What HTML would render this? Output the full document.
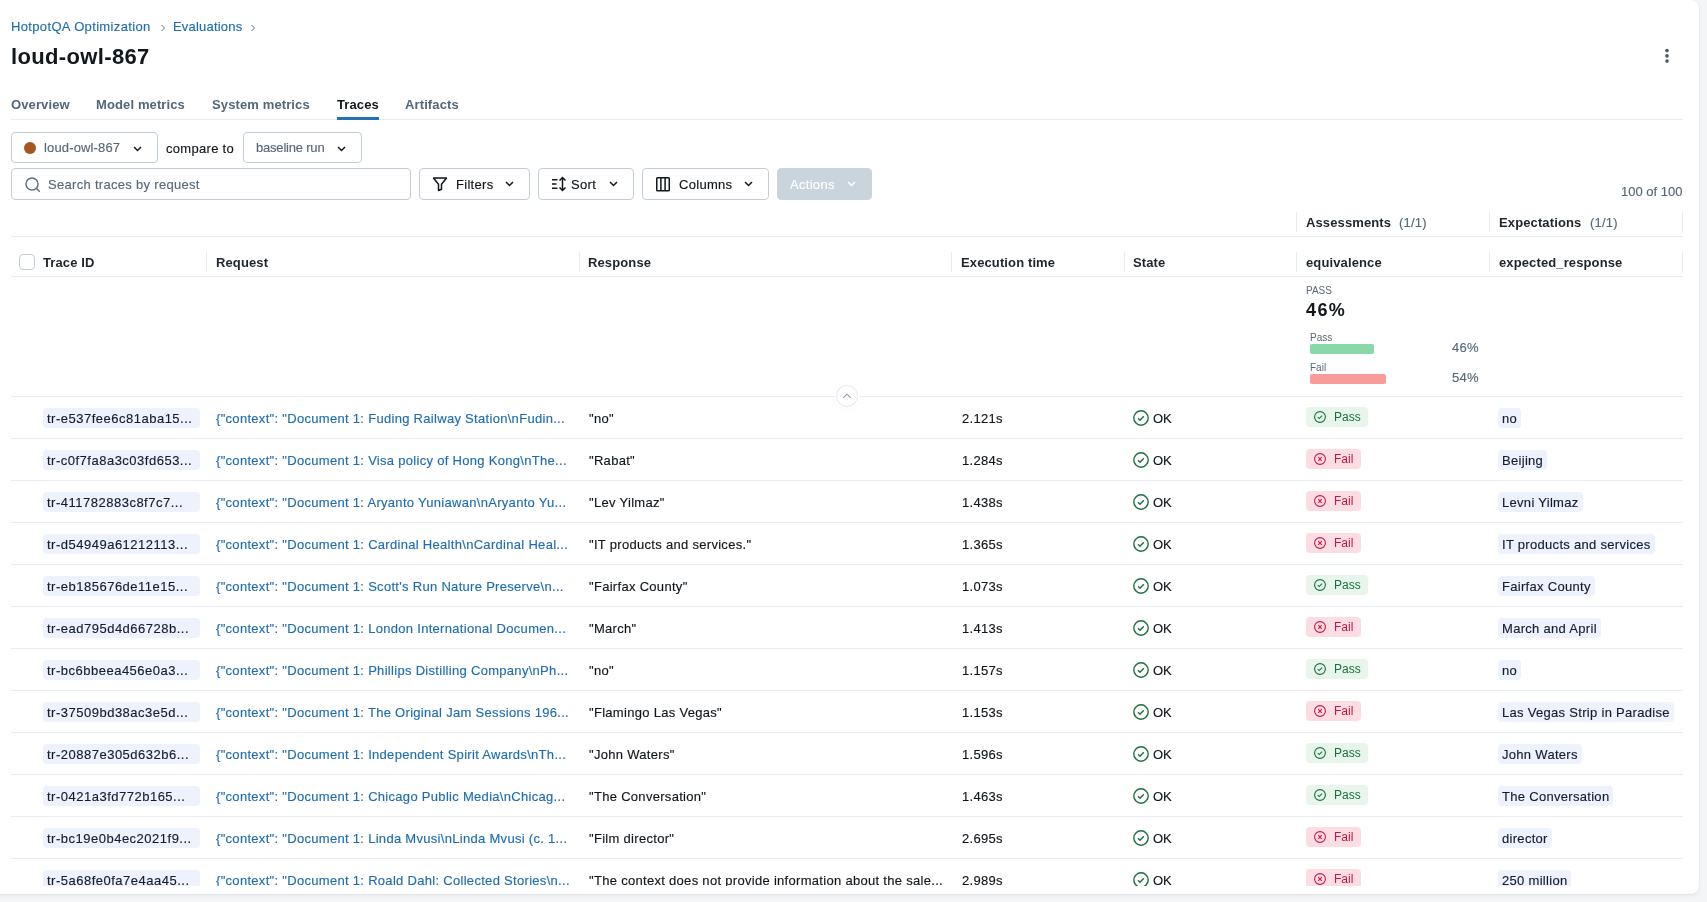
<!DOCTYPE html>
<html><head><meta charset="utf-8">
<style>
*{box-sizing:border-box;margin:0;padding:0}
html,body{width:1707px;height:902px;overflow:hidden;background:#f4f5f7;font-family:"Liberation Sans",sans-serif;color:#11171c}
.panel{position:absolute;left:-10px;top:0;width:1709px;height:894px;background:#fff;border-radius:8px;box-shadow:0 1px 2px rgba(0,0,0,0.05),0 2px 6px rgba(0,0,0,0.04),0 0 1px rgba(0,0,0,0.08);overflow:hidden}
.abs{position:absolute;white-space:nowrap}
.c{position:absolute;left:10px;top:0;width:1699px;height:884px;will-change:transform}
.t{position:absolute;white-space:nowrap;font-size:13px;line-height:16px;letter-spacing:0.3px;-webkit-text-stroke:0.15px currentColor}
.b{font-weight:700;letter-spacing:0.12px;-webkit-text-stroke:0;color:#1e252b}
.g{color:#56697a}
.bl{color:#1f6db0}
.btn{position:absolute;border:1px solid #c0cdd8;border-radius:4px;background:#fff;height:32px}
.hl{position:absolute;height:1px;background:#e8ecf0;left:11px;width:1672px}
.vs{position:absolute;width:1px;background:#e8ecf0}
.tag{-webkit-text-stroke:0.15px currentColor;position:absolute;height:20px;border-radius:4px;background:#edf2fd;color:#141d33;white-space:nowrap;font-size:13px;line-height:20px;letter-spacing:0.3px;padding:1px 4px 0;overflow:hidden}
.rows{position:absolute;left:0;top:0;width:1699px;height:886px;overflow:hidden}
</style></head><body>
<div class="panel"><div class="c">

<div class="t bl" style="left:11px;top:19px;letter-spacing:0.35px">HotpotQA Optimization</div>
<svg class="abs" style="left:160px;top:24px" width="6" height="8" viewBox="0 0 6 8"><path d="M1.5 1l3 3-3 3" fill="none" stroke="#5f7281" stroke-width="1"/></svg>
<div class="t bl" style="left:173px;top:19px;letter-spacing:0.2px">Evaluations</div>
<svg class="abs" style="left:250px;top:24px" width="6" height="8" viewBox="0 0 6 8"><path d="M1.5 1l3 3-3 3" fill="none" stroke="#5f7281" stroke-width="1"/></svg>
<div class="abs" style="left:11px;top:43px;font-size:22px;line-height:28px;font-weight:700;letter-spacing:0.35px">loud-owl-867</div>
<svg class="abs" style="left:1663px;top:47px" width="8" height="18" viewBox="0 0 8 18"><circle cx="4" cy="3.6" r="1.8" fill="#44596a"/><circle cx="4" cy="8.9" r="1.8" fill="#44596a"/><circle cx="4" cy="14.1" r="1.8" fill="#44596a"/></svg>
<div class="t b" style="left:11px;top:97px;color:#53677a">Overview</div>
<div class="t b" style="left:96px;top:97px;color:#53677a">Model metrics</div>
<div class="t b" style="left:212px;top:97px;color:#53677a">System metrics</div>
<div class="t b" style="left:337px;top:97px;color:#11171c">Traces</div>
<div class="t b" style="left:405px;top:97px;color:#53677a">Artifacts</div>
<div class="hl" style="top:119px"></div>
<div class="abs" style="left:337px;top:117px;width:42px;height:3px;background:#2272b4"></div>
<div class="btn" style="left:11px;top:132px;width:147px;height:31px"></div>
<div class="abs" style="left:24px;top:142px;width:12px;height:12px;border-radius:6px;background:#a4561f"></div>
<div class="t g" style="left:44px;top:140px;letter-spacing:0.15px">loud-owl-867</div>
<svg class="abs" style="left:133px;top:146px" width="9" height="6" viewBox="0 0 9 6"><path d="M1 1l3.5 3.5L8 1" fill="none" stroke="#11171c" stroke-width="1.5"/></svg>
<div class="t" style="left:166px;top:141px">compare to</div>
<div class="btn" style="left:243px;top:132px;width:119px;height:31px"></div>
<div class="t g" style="left:256px;top:140px;letter-spacing:-0.2px">baseline run</div>
<svg class="abs" style="left:337px;top:146px" width="9" height="6" viewBox="0 0 9 6"><path d="M1 1l3.5 3.5L8 1" fill="none" stroke="#11171c" stroke-width="1.5"/></svg>
<div class="btn" style="left:11px;top:168px;width:400px"></div>
<svg class="abs" style="left:25px;top:177px" width="16" height="16" viewBox="0 0 16 16"><circle cx="7" cy="7" r="6" fill="none" stroke="#5f7281" stroke-width="1.5"/><path d="M11.3 11.3l3.5 3.5" stroke="#5f7281" stroke-width="1.5"/></svg>
<div class="t g" style="left:48px;top:177px">Search traces by request</div>
<div class="btn" style="left:419px;top:168px;width:111px"></div>
<svg class="abs" style="left:432px;top:176px" width="16" height="16" viewBox="0 0 16 16"><path d="M1.5 2h13l-5 6.3v5l-3 1.2V8.3z" fill="none" stroke="#11171c" stroke-width="1.5" stroke-linejoin="round"/></svg>
<div class="t" style="left:456px;top:177px">Filters</div>
<svg class="abs" style="left:505px;top:181px" width="9" height="6" viewBox="0 0 9 6"><path d="M1 1l3.5 3.5L8 1" fill="none" stroke="#11171c" stroke-width="1.5"/></svg>
<div class="btn" style="left:538px;top:168px;width:96px"></div>
<svg class="abs" style="left:551px;top:176px" width="17" height="16" viewBox="0 0 17 16"><path d="M1 3.7h5.5M1 7.9h4.5M1 12.3h5.5" stroke="#11171c" stroke-width="1.5"/><path d="M11.5 1.5v13M8.5 4.5l3-3 3 3M8.5 11.5l3 3 3-3" fill="none" stroke="#11171c" stroke-width="1.5"/></svg>
<div class="t" style="left:571px;top:177px">Sort</div>
<svg class="abs" style="left:609px;top:181px" width="9" height="6" viewBox="0 0 9 6"><path d="M1 1l3.5 3.5L8 1" fill="none" stroke="#11171c" stroke-width="1.5"/></svg>
<div class="btn" style="left:642px;top:168px;width:127px"></div>
<svg class="abs" style="left:656px;top:176px" width="14" height="16" viewBox="0 0 14 16"><rect x="0.75" y="1.75" width="12.5" height="13" rx="0.8" fill="none" stroke="#11171c" stroke-width="1.5"/><path d="M4.9 2v12.5M9.1 2v12.5" stroke="#11171c" stroke-width="1.5"/></svg>
<div class="t" style="left:679px;top:177px">Columns</div>
<svg class="abs" style="left:744px;top:181px" width="9" height="6" viewBox="0 0 9 6"><path d="M1 1l3.5 3.5L8 1" fill="none" stroke="#11171c" stroke-width="1.5"/></svg>
<div class="btn" style="left:777px;top:168px;width:95px;background:#cad4dd;border-color:#cad4dd"></div>
<div class="t" style="left:790px;top:177px;color:#fff">Actions</div>
<svg class="abs" style="left:847px;top:181px" width="9" height="6" viewBox="0 0 9 6"><path d="M1 1l3.5 3.5L8 1" fill="none" stroke="#fff" stroke-width="1.5"/></svg>
<div class="t g" style="left:1621px;top:184px;letter-spacing:0">100 of 100</div>
<div class="vs" style="left:1296px;top:212px;height:20px"></div>
<div class="vs" style="left:1489px;top:212px;height:20px"></div>
<div class="vs" style="left:1682px;top:212px;height:20px"></div>
<div class="t b" style="left:1306px;top:215px">Assessments</div><div class="t g" style="left:1399px;top:215px;letter-spacing:0.2px">(1/1)</div>
<div class="t b" style="left:1499px;top:215px">Expectations</div><div class="t g" style="left:1590px;top:215px;letter-spacing:0.2px">(1/1)</div>
<div class="hl" style="top:236px"></div>
<div class="abs" style="left:19px;top:254px;width:16px;height:16px;border:1px solid #c0cdd8;border-radius:4px;background:#fff"></div>
<div class="t b" style="left:43px;top:255px">Trace ID</div>
<div class="t b" style="left:216px;top:255px">Request</div>
<div class="t b" style="left:588px;top:255px">Response</div>
<div class="t b" style="left:961px;top:255px">Execution time</div>
<div class="t b" style="left:1133px;top:255px">State</div>
<div class="t b" style="left:1306px;top:255px">equivalence</div>
<div class="t b" style="left:1499px;top:255px">expected_response</div>
<div class="vs" style="left:206px;top:252px;height:20px"></div>
<div class="vs" style="left:579px;top:252px;height:20px"></div>
<div class="vs" style="left:951px;top:252px;height:20px"></div>
<div class="vs" style="left:1124px;top:252px;height:20px"></div>
<div class="vs" style="left:1296px;top:252px;height:20px"></div>
<div class="vs" style="left:1489px;top:252px;height:20px"></div>
<div class="vs" style="left:1682px;top:252px;height:20px"></div>
<div class="hl" style="top:276px"></div>
<div class="abs g" style="left:1306px;top:285px;font-size:10px;line-height:12px;letter-spacing:0">PASS</div>
<div class="abs" style="left:1306px;top:300px;font-size:18px;line-height:20px;font-weight:700;letter-spacing:1.4px">46%</div>
<div class="abs g" style="left:1310px;top:332px;font-size:10px;line-height:12px">Pass</div>
<div class="abs" style="left:1310px;top:344px;width:64px;height:10px;border-radius:2px;background:#8ad8a9"></div>
<div class="t g" style="left:1452px;top:340px">46%</div>
<div class="abs g" style="left:1310px;top:362px;font-size:10px;line-height:12px">Fail</div>
<div class="abs" style="left:1310px;top:374px;width:76px;height:10px;border-radius:2px;background:#f89b9b"></div>
<div class="t g" style="left:1452px;top:370px">54%</div>
<div class="hl" style="top:396px"></div>
<div class="abs" style="left:837px;top:386px;width:20px;height:20px;border-radius:10px;background:#fff;box-shadow:0 0 0 1px #e8ecf0,0 0 0 2.5px #fff,0 2px 6px rgba(0,0,0,0.05)"></div>
<svg class="abs" style="left:842px;top:391px" width="10" height="10" viewBox="0 0 10 10"><path d="M1.2 6.8L5 3.2L8.8 6.8" fill="none" stroke="#8a9aa8" stroke-width="1.1"/></svg>
<div class="rows">
<div class="tag" style="left:43px;top:408px;width:157px;letter-spacing:0.5px">tr-e537fee6c81aba15...</div>
<div class="t bl" style="left:216px;top:411px">{"context": "Document 1: Fuding Railway Station\nFudin...</div>
<div class="t" style="left:589px;top:411px">"no"</div>
<div class="t" style="left:962px;top:411px">2.121s</div>
<svg class="abs" style="left:1133px;top:410px" width="16" height="16" viewBox="0 0 16 16"><circle cx="8" cy="8" r="7.2" fill="none" stroke="#1b703d" stroke-width="1.4"/><path d="M5 8.3l2 1.9 3.8-4" fill="none" stroke="#1b703d" stroke-width="1.4"/></svg>
<div class="t" style="left:1153px;top:411px;letter-spacing:0">OK</div>
<div class="abs" style="left:1306px;top:407px;width:62px;height:20px;border-radius:4px;background:#e7f5eb"></div>
<svg class="abs" style="left:1314px;top:411px" width="12" height="12" viewBox="0 0 12 12"><circle cx="6" cy="6" r="5.4" fill="none" stroke="#1b703d" stroke-width="1.1"/><path d="M3.7 6.2l1.5 1.4 2.9-3" fill="none" stroke="#1b703d" stroke-width="1.1"/></svg>
<div class="abs" style="left:1334px;top:409px;font-size:12px;line-height:16px;color:#1b703d;letter-spacing:0">Pass</div>
<div class="tag" style="left:1498px;top:408px">no</div>
<div class="hl" style="top:438px"></div>
<div class="tag" style="left:43px;top:450px;width:157px;letter-spacing:0.5px">tr-c0f7fa8a3c03fd653...</div>
<div class="t bl" style="left:216px;top:453px">{"context": "Document 1: Visa policy of Hong Kong\nThe...</div>
<div class="t" style="left:589px;top:453px">"Rabat"</div>
<div class="t" style="left:962px;top:453px">1.284s</div>
<svg class="abs" style="left:1133px;top:452px" width="16" height="16" viewBox="0 0 16 16"><circle cx="8" cy="8" r="7.2" fill="none" stroke="#1b703d" stroke-width="1.4"/><path d="M5 8.3l2 1.9 3.8-4" fill="none" stroke="#1b703d" stroke-width="1.4"/></svg>
<div class="t" style="left:1153px;top:453px;letter-spacing:0">OK</div>
<div class="abs" style="left:1306px;top:449px;width:55px;height:20px;border-radius:4px;background:#fcdde3"></div>
<svg class="abs" style="left:1314px;top:453px" width="12" height="12" viewBox="0 0 12 12"><circle cx="6" cy="6" r="5.4" fill="none" stroke="#c4183f" stroke-width="1.1"/><path d="M4.2 4.2l3.6 3.6M7.8 4.2l-3.6 3.6" fill="none" stroke="#c4183f" stroke-width="1.1"/></svg>
<div class="abs" style="left:1334px;top:451px;font-size:12px;line-height:16px;color:#c4183f;letter-spacing:0">Fail</div>
<div class="tag" style="left:1498px;top:450px">Beijing</div>
<div class="hl" style="top:480px"></div>
<div class="tag" style="left:43px;top:492px;width:157px;letter-spacing:0.5px">tr-411782883c8f7c7...</div>
<div class="t bl" style="left:216px;top:495px">{"context": "Document 1: Aryanto Yuniawan\nAryanto Yu...</div>
<div class="t" style="left:589px;top:495px">"Lev Yilmaz"</div>
<div class="t" style="left:962px;top:495px">1.438s</div>
<svg class="abs" style="left:1133px;top:494px" width="16" height="16" viewBox="0 0 16 16"><circle cx="8" cy="8" r="7.2" fill="none" stroke="#1b703d" stroke-width="1.4"/><path d="M5 8.3l2 1.9 3.8-4" fill="none" stroke="#1b703d" stroke-width="1.4"/></svg>
<div class="t" style="left:1153px;top:495px;letter-spacing:0">OK</div>
<div class="abs" style="left:1306px;top:491px;width:55px;height:20px;border-radius:4px;background:#fcdde3"></div>
<svg class="abs" style="left:1314px;top:495px" width="12" height="12" viewBox="0 0 12 12"><circle cx="6" cy="6" r="5.4" fill="none" stroke="#c4183f" stroke-width="1.1"/><path d="M4.2 4.2l3.6 3.6M7.8 4.2l-3.6 3.6" fill="none" stroke="#c4183f" stroke-width="1.1"/></svg>
<div class="abs" style="left:1334px;top:493px;font-size:12px;line-height:16px;color:#c4183f;letter-spacing:0">Fail</div>
<div class="tag" style="left:1498px;top:492px">Levni Yilmaz</div>
<div class="hl" style="top:522px"></div>
<div class="tag" style="left:43px;top:534px;width:157px;letter-spacing:0.5px">tr-d54949a61212113...</div>
<div class="t bl" style="left:216px;top:537px">{"context": "Document 1: Cardinal Health\nCardinal Heal...</div>
<div class="t" style="left:589px;top:537px">"IT products and services."</div>
<div class="t" style="left:962px;top:537px">1.365s</div>
<svg class="abs" style="left:1133px;top:536px" width="16" height="16" viewBox="0 0 16 16"><circle cx="8" cy="8" r="7.2" fill="none" stroke="#1b703d" stroke-width="1.4"/><path d="M5 8.3l2 1.9 3.8-4" fill="none" stroke="#1b703d" stroke-width="1.4"/></svg>
<div class="t" style="left:1153px;top:537px;letter-spacing:0">OK</div>
<div class="abs" style="left:1306px;top:533px;width:55px;height:20px;border-radius:4px;background:#fcdde3"></div>
<svg class="abs" style="left:1314px;top:537px" width="12" height="12" viewBox="0 0 12 12"><circle cx="6" cy="6" r="5.4" fill="none" stroke="#c4183f" stroke-width="1.1"/><path d="M4.2 4.2l3.6 3.6M7.8 4.2l-3.6 3.6" fill="none" stroke="#c4183f" stroke-width="1.1"/></svg>
<div class="abs" style="left:1334px;top:535px;font-size:12px;line-height:16px;color:#c4183f;letter-spacing:0">Fail</div>
<div class="tag" style="left:1498px;top:534px">IT products and services</div>
<div class="hl" style="top:564px"></div>
<div class="tag" style="left:43px;top:576px;width:157px;letter-spacing:0.5px">tr-eb185676de11e15...</div>
<div class="t bl" style="left:216px;top:579px">{"context": "Document 1: Scott's Run Nature Preserve\n...</div>
<div class="t" style="left:589px;top:579px">"Fairfax County"</div>
<div class="t" style="left:962px;top:579px">1.073s</div>
<svg class="abs" style="left:1133px;top:578px" width="16" height="16" viewBox="0 0 16 16"><circle cx="8" cy="8" r="7.2" fill="none" stroke="#1b703d" stroke-width="1.4"/><path d="M5 8.3l2 1.9 3.8-4" fill="none" stroke="#1b703d" stroke-width="1.4"/></svg>
<div class="t" style="left:1153px;top:579px;letter-spacing:0">OK</div>
<div class="abs" style="left:1306px;top:575px;width:62px;height:20px;border-radius:4px;background:#e7f5eb"></div>
<svg class="abs" style="left:1314px;top:579px" width="12" height="12" viewBox="0 0 12 12"><circle cx="6" cy="6" r="5.4" fill="none" stroke="#1b703d" stroke-width="1.1"/><path d="M3.7 6.2l1.5 1.4 2.9-3" fill="none" stroke="#1b703d" stroke-width="1.1"/></svg>
<div class="abs" style="left:1334px;top:577px;font-size:12px;line-height:16px;color:#1b703d;letter-spacing:0">Pass</div>
<div class="tag" style="left:1498px;top:576px">Fairfax County</div>
<div class="hl" style="top:606px"></div>
<div class="tag" style="left:43px;top:618px;width:157px;letter-spacing:0.5px">tr-ead795d4d66728b...</div>
<div class="t bl" style="left:216px;top:621px">{"context": "Document 1: London International Documen...</div>
<div class="t" style="left:589px;top:621px">"March"</div>
<div class="t" style="left:962px;top:621px">1.413s</div>
<svg class="abs" style="left:1133px;top:620px" width="16" height="16" viewBox="0 0 16 16"><circle cx="8" cy="8" r="7.2" fill="none" stroke="#1b703d" stroke-width="1.4"/><path d="M5 8.3l2 1.9 3.8-4" fill="none" stroke="#1b703d" stroke-width="1.4"/></svg>
<div class="t" style="left:1153px;top:621px;letter-spacing:0">OK</div>
<div class="abs" style="left:1306px;top:617px;width:55px;height:20px;border-radius:4px;background:#fcdde3"></div>
<svg class="abs" style="left:1314px;top:621px" width="12" height="12" viewBox="0 0 12 12"><circle cx="6" cy="6" r="5.4" fill="none" stroke="#c4183f" stroke-width="1.1"/><path d="M4.2 4.2l3.6 3.6M7.8 4.2l-3.6 3.6" fill="none" stroke="#c4183f" stroke-width="1.1"/></svg>
<div class="abs" style="left:1334px;top:619px;font-size:12px;line-height:16px;color:#c4183f;letter-spacing:0">Fail</div>
<div class="tag" style="left:1498px;top:618px">March and April</div>
<div class="hl" style="top:648px"></div>
<div class="tag" style="left:43px;top:660px;width:157px;letter-spacing:0.5px">tr-bc6bbeea456e0a3...</div>
<div class="t bl" style="left:216px;top:663px">{"context": "Document 1: Phillips Distilling Company\nPh...</div>
<div class="t" style="left:589px;top:663px">"no"</div>
<div class="t" style="left:962px;top:663px">1.157s</div>
<svg class="abs" style="left:1133px;top:662px" width="16" height="16" viewBox="0 0 16 16"><circle cx="8" cy="8" r="7.2" fill="none" stroke="#1b703d" stroke-width="1.4"/><path d="M5 8.3l2 1.9 3.8-4" fill="none" stroke="#1b703d" stroke-width="1.4"/></svg>
<div class="t" style="left:1153px;top:663px;letter-spacing:0">OK</div>
<div class="abs" style="left:1306px;top:659px;width:62px;height:20px;border-radius:4px;background:#e7f5eb"></div>
<svg class="abs" style="left:1314px;top:663px" width="12" height="12" viewBox="0 0 12 12"><circle cx="6" cy="6" r="5.4" fill="none" stroke="#1b703d" stroke-width="1.1"/><path d="M3.7 6.2l1.5 1.4 2.9-3" fill="none" stroke="#1b703d" stroke-width="1.1"/></svg>
<div class="abs" style="left:1334px;top:661px;font-size:12px;line-height:16px;color:#1b703d;letter-spacing:0">Pass</div>
<div class="tag" style="left:1498px;top:660px">no</div>
<div class="hl" style="top:690px"></div>
<div class="tag" style="left:43px;top:702px;width:157px;letter-spacing:0.5px">tr-37509bd38ac3e5d...</div>
<div class="t bl" style="left:216px;top:705px">{"context": "Document 1: The Original Jam Sessions 196...</div>
<div class="t" style="left:589px;top:705px">"Flamingo Las Vegas"</div>
<div class="t" style="left:962px;top:705px">1.153s</div>
<svg class="abs" style="left:1133px;top:704px" width="16" height="16" viewBox="0 0 16 16"><circle cx="8" cy="8" r="7.2" fill="none" stroke="#1b703d" stroke-width="1.4"/><path d="M5 8.3l2 1.9 3.8-4" fill="none" stroke="#1b703d" stroke-width="1.4"/></svg>
<div class="t" style="left:1153px;top:705px;letter-spacing:0">OK</div>
<div class="abs" style="left:1306px;top:701px;width:55px;height:20px;border-radius:4px;background:#fcdde3"></div>
<svg class="abs" style="left:1314px;top:705px" width="12" height="12" viewBox="0 0 12 12"><circle cx="6" cy="6" r="5.4" fill="none" stroke="#c4183f" stroke-width="1.1"/><path d="M4.2 4.2l3.6 3.6M7.8 4.2l-3.6 3.6" fill="none" stroke="#c4183f" stroke-width="1.1"/></svg>
<div class="abs" style="left:1334px;top:703px;font-size:12px;line-height:16px;color:#c4183f;letter-spacing:0">Fail</div>
<div class="tag" style="left:1498px;top:702px">Las Vegas Strip in Paradise</div>
<div class="hl" style="top:732px"></div>
<div class="tag" style="left:43px;top:744px;width:157px;letter-spacing:0.5px">tr-20887e305d632b6...</div>
<div class="t bl" style="left:216px;top:747px">{"context": "Document 1: Independent Spirit Awards\nTh...</div>
<div class="t" style="left:589px;top:747px">"John Waters"</div>
<div class="t" style="left:962px;top:747px">1.596s</div>
<svg class="abs" style="left:1133px;top:746px" width="16" height="16" viewBox="0 0 16 16"><circle cx="8" cy="8" r="7.2" fill="none" stroke="#1b703d" stroke-width="1.4"/><path d="M5 8.3l2 1.9 3.8-4" fill="none" stroke="#1b703d" stroke-width="1.4"/></svg>
<div class="t" style="left:1153px;top:747px;letter-spacing:0">OK</div>
<div class="abs" style="left:1306px;top:743px;width:62px;height:20px;border-radius:4px;background:#e7f5eb"></div>
<svg class="abs" style="left:1314px;top:747px" width="12" height="12" viewBox="0 0 12 12"><circle cx="6" cy="6" r="5.4" fill="none" stroke="#1b703d" stroke-width="1.1"/><path d="M3.7 6.2l1.5 1.4 2.9-3" fill="none" stroke="#1b703d" stroke-width="1.1"/></svg>
<div class="abs" style="left:1334px;top:745px;font-size:12px;line-height:16px;color:#1b703d;letter-spacing:0">Pass</div>
<div class="tag" style="left:1498px;top:744px">John Waters</div>
<div class="hl" style="top:774px"></div>
<div class="tag" style="left:43px;top:786px;width:157px;letter-spacing:0.5px">tr-0421a3fd772b165...</div>
<div class="t bl" style="left:216px;top:789px">{"context": "Document 1: Chicago Public Media\nChicag...</div>
<div class="t" style="left:589px;top:789px">"The Conversation"</div>
<div class="t" style="left:962px;top:789px">1.463s</div>
<svg class="abs" style="left:1133px;top:788px" width="16" height="16" viewBox="0 0 16 16"><circle cx="8" cy="8" r="7.2" fill="none" stroke="#1b703d" stroke-width="1.4"/><path d="M5 8.3l2 1.9 3.8-4" fill="none" stroke="#1b703d" stroke-width="1.4"/></svg>
<div class="t" style="left:1153px;top:789px;letter-spacing:0">OK</div>
<div class="abs" style="left:1306px;top:785px;width:62px;height:20px;border-radius:4px;background:#e7f5eb"></div>
<svg class="abs" style="left:1314px;top:789px" width="12" height="12" viewBox="0 0 12 12"><circle cx="6" cy="6" r="5.4" fill="none" stroke="#1b703d" stroke-width="1.1"/><path d="M3.7 6.2l1.5 1.4 2.9-3" fill="none" stroke="#1b703d" stroke-width="1.1"/></svg>
<div class="abs" style="left:1334px;top:787px;font-size:12px;line-height:16px;color:#1b703d;letter-spacing:0">Pass</div>
<div class="tag" style="left:1498px;top:786px">The Conversation</div>
<div class="hl" style="top:816px"></div>
<div class="tag" style="left:43px;top:828px;width:157px;letter-spacing:0.5px">tr-bc19e0b4ec2021f9...</div>
<div class="t bl" style="left:216px;top:831px">{"context": "Document 1: Linda Mvusi\nLinda Mvusi (c. 1...</div>
<div class="t" style="left:589px;top:831px">"Film director"</div>
<div class="t" style="left:962px;top:831px">2.695s</div>
<svg class="abs" style="left:1133px;top:830px" width="16" height="16" viewBox="0 0 16 16"><circle cx="8" cy="8" r="7.2" fill="none" stroke="#1b703d" stroke-width="1.4"/><path d="M5 8.3l2 1.9 3.8-4" fill="none" stroke="#1b703d" stroke-width="1.4"/></svg>
<div class="t" style="left:1153px;top:831px;letter-spacing:0">OK</div>
<div class="abs" style="left:1306px;top:827px;width:55px;height:20px;border-radius:4px;background:#fcdde3"></div>
<svg class="abs" style="left:1314px;top:831px" width="12" height="12" viewBox="0 0 12 12"><circle cx="6" cy="6" r="5.4" fill="none" stroke="#c4183f" stroke-width="1.1"/><path d="M4.2 4.2l3.6 3.6M7.8 4.2l-3.6 3.6" fill="none" stroke="#c4183f" stroke-width="1.1"/></svg>
<div class="abs" style="left:1334px;top:829px;font-size:12px;line-height:16px;color:#c4183f;letter-spacing:0">Fail</div>
<div class="tag" style="left:1498px;top:828px">director</div>
<div class="hl" style="top:858px"></div>
<div class="tag" style="left:43px;top:870px;width:157px;letter-spacing:0.5px">tr-5a68fe0fa7e4aa45...</div>
<div class="t bl" style="left:216px;top:873px">{"context": "Document 1: Roald Dahl: Collected Stories\n...</div>
<div class="t" style="left:589px;top:873px">"The context does not provide information about the sale...</div>
<div class="t" style="left:962px;top:873px">2.989s</div>
<svg class="abs" style="left:1133px;top:872px" width="16" height="16" viewBox="0 0 16 16"><circle cx="8" cy="8" r="7.2" fill="none" stroke="#1b703d" stroke-width="1.4"/><path d="M5 8.3l2 1.9 3.8-4" fill="none" stroke="#1b703d" stroke-width="1.4"/></svg>
<div class="t" style="left:1153px;top:873px;letter-spacing:0">OK</div>
<div class="abs" style="left:1306px;top:869px;width:55px;height:20px;border-radius:4px;background:#fcdde3"></div>
<svg class="abs" style="left:1314px;top:873px" width="12" height="12" viewBox="0 0 12 12"><circle cx="6" cy="6" r="5.4" fill="none" stroke="#c4183f" stroke-width="1.1"/><path d="M4.2 4.2l3.6 3.6M7.8 4.2l-3.6 3.6" fill="none" stroke="#c4183f" stroke-width="1.1"/></svg>
<div class="abs" style="left:1334px;top:871px;font-size:12px;line-height:16px;color:#c4183f;letter-spacing:0">Fail</div>
<div class="tag" style="left:1498px;top:870px">250 million</div>
<div class="hl" style="top:900px"></div>
</div>
</div></div></body></html>
